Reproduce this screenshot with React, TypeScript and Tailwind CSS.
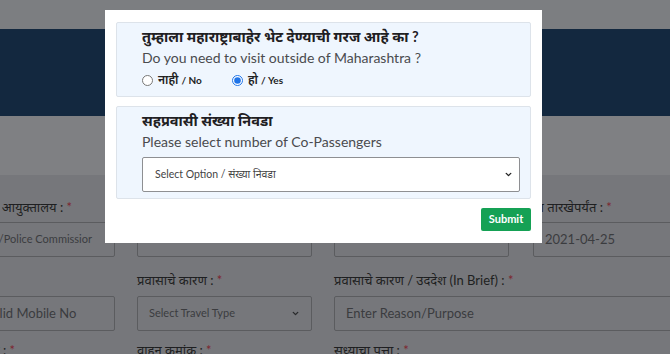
import React from 'react';

const font = { fontFamily: 'Lato, "Noto Sans", "Noto Sans Devanagari", sans-serif' };

function Chevron({ className }: { className?: string }) {
  return (
    <svg viewBox="0 0 16 16" className={className} fill="none" stroke="currentColor" strokeWidth="2.4" strokeLinecap="round" strokeLinejoin="round">
      <path d="M4 6l4 4 4-4" />
    </svg>
  );
}

function Label({ text }: { text: string }) {
  return (
    <div className="h-5 leading-5 text-[13px] text-[#1e1f21] whitespace-nowrap">
      {text} <span className="text-[#7d2630]">*</span>
    </div>
  );
}

function Field({ text, select, small }: { text: string; select?: boolean; small?: boolean }) {
  return (
    <div className="h-[35px] border border-[#5b5c5f] rounded-[2px] flex items-center px-[11px] overflow-hidden">
      <span className={`flex-1 whitespace-nowrap overflow-hidden text-[#3b3c3f] ${small ? 'text-[11px]' : 'text-[13px]'}`}>{text}</span>
      {select && <Chevron className="w-[9px] h-[9px] text-[#2a2b2d] shrink-0" />}
    </div>
  );
}

export default function App() {
  return (
    <div className="relative w-[670px] h-[354px] overflow-hidden bg-[#76777b]" style={font}>
      {/* dimmed page behind the modal */}
      <div className="h-[29px] bg-[#7c7e81]" />
      <div className="h-[87px] bg-[#13283f]" />
      <div className="h-[59px] bg-[#7f8083]" />
      <div className="ml-[-60px] grid grid-cols-[175px_175px_175px_175px] gap-x-[22px] pt-[22px]">
        <div className="flex flex-col gap-[5px]">
          <div className="flex justify-end pr-[43px]"><Label text="पोलीस आयुक्तालय :" /></div>
          <div className="h-[35px] border border-[#5b5c5f] rounded-[2px] flex items-center pr-[22px] overflow-hidden justify-end">
            <span className="whitespace-nowrap text-[11px] text-[#3b3c3f]">Select District/Police Commissior</span>
          </div>
        </div>
        <div className="flex flex-col gap-[5px]">
          <Label text="प्रवासाचा दिनांक :" />
          <Field text="" />
        </div>
        <div className="flex flex-col gap-[5px]">
          <Label text="प्रवासाचा कालावधी :" />
          <Field text="" />
        </div>
        <div className="flex flex-col gap-[5px] pl-[2px]">
          <Label text="या तारखेपर्यंत :" />
          <Field text="2021-04-25" />
        </div>

        <div className="flex flex-col gap-[6px] mt-[13px]">
          <div className="h-5" />
          <Field text="Enter Valid Mobile No" />
        </div>
        <div className="flex flex-col gap-[6px] mt-[13px]">
          <Label text="प्रवासाचे कारण :" />
          <Field text="Select Travel Type" select small />
        </div>
        <div className="col-span-2 flex flex-col gap-[6px] mt-[13px]">
          <Label text="प्रवासाचे कारण / उददेश (In Brief) :" />
          <Field text="Enter Reason/Purpose" />
        </div>

        <div className="mt-[9px] flex justify-end pr-[100px]"><Label text="पत्त :" /></div>
        <div className="mt-[9px]"><Label text="वाहन क्रमांक :" /></div>
        <div className="mt-[9px]"><Label text="सध्याचा पत्ता :" /></div>
        <div />
      </div>

      {/* modal */}
      <div className="absolute left-[105px] top-[10px] w-[437px] h-[233px] bg-white px-[11px] pt-[12px] flex flex-col">
        <div className="h-[75px] bg-[#eff6fe] border border-[#dde3ea] rounded-[2px] pl-[25px] pt-[4px]">
          <div className="text-[14.5px] font-bold leading-[20px] text-[#1f2023]">तुम्हाला महाराष्ट्राबाहेर भेट देण्याची गरज आहे का ?</div>
          <div className="text-[14px] leading-[20px] mt-[1px] text-[#4a4b4e]">Do you need to visit outside of Maharashtra ?</div>
          <div className="flex items-center gap-[30px] mt-[2px] text-[12px] font-semibold leading-[20px] text-[#222]">
            <label className="flex items-center gap-[5px]">
              <input type="radio" name="visit" className="w-[11px] h-[11px] m-0 accent-[#1f74e8]" />
              <span>नाही <span className="text-[10px] font-bold">/ No</span></span>
            </label>
            <label className="flex items-center gap-[5px]">
              <input type="radio" name="visit" defaultChecked className="w-[11px] h-[11px] m-0 accent-[#1f74e8]" />
              <span>हो <span className="text-[10px] font-bold">/ Yes</span></span>
            </label>
          </div>
        </div>
        <div className="h-[93px] mt-[9px] bg-[#eff6fe] border border-[#dde3ea] rounded-[2px] pl-[25px] pr-[10px] pt-[4px]">
          <div className="text-[14.5px] font-bold leading-[20px] text-[#1f2023]">सहप्रवासी संख्या निवडा</div>
          <div className="text-[14px] leading-[20px] mt-[1px] text-[#4a4b4e]">Please select number of Co-Passengers</div>
          <div className="mt-[5px] h-[35px] bg-white border border-[#8e8f92] rounded-[2px] flex items-center pl-[12px] pr-[6px]">
            <span className="flex-1 text-[10.5px] text-[#444]">Select Option / संख्या निवडा</span>
            <Chevron className="w-[9px] h-[9px] text-[#222]" />
          </div>
        </div>
        <div className="flex justify-end mt-[9px]">
          <button className="h-[23px] w-[50px] rounded-[2px] bg-[#15a155] text-white text-[11px] font-bold">Submit</button>
        </div>
      </div>
    </div>
  );
}
